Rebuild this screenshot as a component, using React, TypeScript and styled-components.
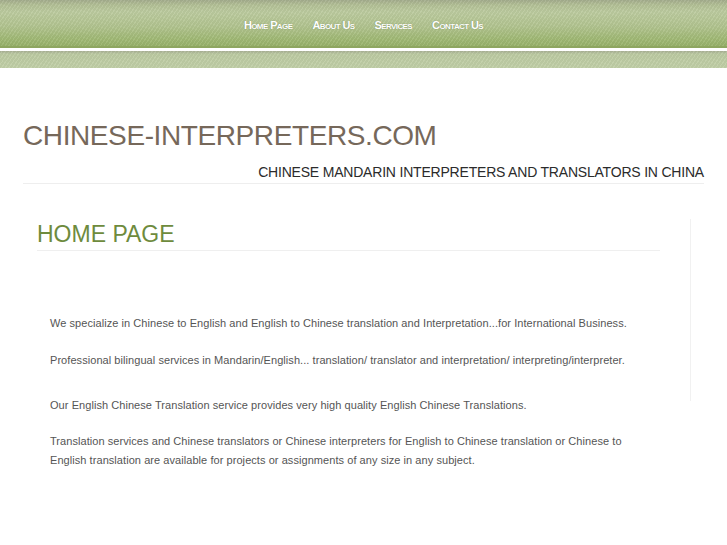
import React from 'react';
import styled, { createGlobalStyle } from 'styled-components';

const GlobalStyle = createGlobalStyle`
  html, body {
    margin: 0;
    padding: 0;
    background: #fff;
  }
  body {
    font-family: 'Liberation Sans', Arial, sans-serif;
  }
`;

const stripes = `repeating-linear-gradient(
  -55deg,
  rgba(255, 255, 255, 0.07) 0px,
  rgba(255, 255, 255, 0.07) 1px,
  rgba(0, 0, 0, 0.03) 1px,
  rgba(0, 0, 0, 0.03) 3px
)`;

const NavBar = styled.div`
  height: 46px;
  background: ${stripes},
    linear-gradient(
      to bottom,
      #a3ac8c 0px,
      #b3c096 5px,
      #bccb9f 12px,
      #b2c490 26px,
      #9fb873 40px,
      #98b26a 46px
    );
  border-bottom: 2px solid #8ea660;
  display: flex;
  align-items: center;
  justify-content: center;
`;

const NavList = styled.ul`
  display: flex;
  gap: 20px;
  margin: 0;
  padding: 1px 0 0 0;
  list-style: none;
`;

const NavLink = styled.a`
  font-family: 'Liberation Sans', Arial, sans-serif;
  font-weight: bold;
  font-size: 11px;
  font-variant: small-caps;
  letter-spacing: -0.6px;
  color: #fff;
  text-decoration: none;
  text-shadow: 0 0 1px rgba(70, 90, 40, 0.6);
`;

const Gap = styled.div`
  height: 3px;
  background: #fff;
`;

const SubBand = styled.div`
  height: 17px;
  background: ${stripes},
    linear-gradient(to bottom, #a9b195 0px, #bccaa2 3px, #c1cfa7 17px);
`;

const Page = styled.div`
  width: 681px;
  margin: 0 auto;
`;

const Header = styled.div`
  padding-top: 52px;
  padding-bottom: 3px;
  border-bottom: 1px solid #eeeeee;
`;

const SiteTitle = styled.h1`
  margin: 0;
  font-family: 'Liberation Sans', Arial, sans-serif;
  font-weight: normal;
  font-size: 28px;
  line-height: 32px;
  letter-spacing: -0.4px;
  color: #76685a;
`;

const Tagline = styled.h2`
  margin: 12px 0 0 0;
  font-family: 'Liberation Sans', Arial, sans-serif;
  font-weight: normal;
  font-size: 14px;
  line-height: 16px;
  letter-spacing: -0.2px;
  text-align: right;
  color: #2b2b2b;
`;

const Body = styled.div`
  display: flex;
  padding-top: 35px;
`;

const Main = styled.div`
  width: 623px;
  padding-left: 14px;
`;

const Heading = styled.h2`
  margin: 0;
  padding: 2px 0 2px 0;
  border-bottom: 1px solid #efefef;
  font-family: 'Liberation Sans', Arial, sans-serif;
  font-weight: normal;
  font-size: 23px;
  line-height: 27px;
  color: #6e8b3d;
`;

const Text = styled.p<{ extra?: number }>`
  margin: ${(p) => 17 + (p.extra || 0)}px 0 0 0;
  padding: 0 13px;
  font-family: 'Liberation Sans', Arial, sans-serif;
  font-size: 11px;
  line-height: 19px;
  letter-spacing: 0.06px;
  color: #555;
  &:first-child {
    margin-top: 63px;
  }
`;

const Content = styled.div``;

const Sidebar = styled.div`
  margin-left: 30px;
  height: 182px;
  border-left: 1px solid #f1f1f1;
`;

const links = ['Home Page', 'About Us', 'Services', 'Contact Us'];

export default function App() {
  return (
    <>
      <GlobalStyle />
      <NavBar>
        <NavList>
          {links.map((l) => (
            <li key={l}>
              <NavLink href="#">{l}</NavLink>
            </li>
          ))}
        </NavList>
      </NavBar>
      <Gap />
      <SubBand />
      <Page>
        <Header>
          <SiteTitle>CHINESE-INTERPRETERS.COM</SiteTitle>
          <Tagline>CHINESE MANDARIN INTERPRETERS AND TRANSLATORS IN CHINA</Tagline>
        </Header>
        <Body>
          <Main>
            <Heading>HOME PAGE</Heading>
            <Content>
              <Text>
                We specialize in Chinese to English and English to Chinese translation and
                Interpretation...for International Business.
              </Text>
              <Text extra={1}>
                Professional bilingual services in Mandarin/English... translation/ translator and
                interpretation/ interpreting/interpreter.
              </Text>
              <Text extra={9}>
                Our English Chinese Translation service provides very high quality English Chinese
                Translations.
              </Text>
              <Text>
                Translation services and Chinese translators or Chinese interpreters for English to
                Chinese translation or Chinese to English translation are available for projects or
                assignments of any size in any subject.
              </Text>
            </Content>
          </Main>
          <Sidebar />
        </Body>
      </Page>
    </>
  );
}
